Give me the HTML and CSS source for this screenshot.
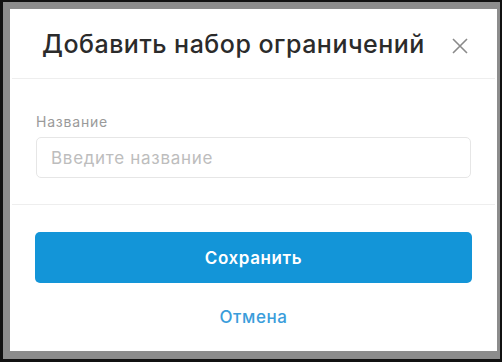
FILE: index.html
```html
<!DOCTYPE html>
<html lang="ru">
<head>
    <meta charset="UTF-8">
    <meta name="viewport" content="width=device-width, initial-scale=1.0">
    <title>Добавить набор ограничений</title>
    <link rel="stylesheet" href="styles.css">
</head>
<body>
    <div class="modal">
        <div class="modal-header">
            <h1 class="modal-title">Добавить набор ограничений</h1>
            <button class="close-button" aria-label="Закрыть">
                <svg width="16" height="16" viewBox="0 0 16 16"><path d="M1 1L15 15M15 1L1 15" stroke="#8a8a8a" stroke-width="1.6" fill="none"/></svg>
            </button>
        </div>
        <div class="modal-body">
            <label class="field-label" for="name">Название</label>
            <input id="name" class="field-input" type="text" placeholder="Введите название">
        </div>
        <div class="modal-footer">
            <button class="save-button">Сохранить</button>
            <a href="#" class="cancel-link">Отмена</a>
        </div>
    </div>
</body>
</html>
```

FILE: styles.css
```css
*{
    margin: 0px;
    box-sizing: border-box;
}
body{
    width: 502px;
    height: 362px;
    background-color: #8c8c8c;
    border-style: solid;
    border-color: #111;
    border-width: 2px 2px 3px 3px;
    padding: 7px 3px 8px 7px;
    font-family: Inter, "Noto Sans", sans-serif;
}
.modal{
    height: 100%;
    background-color: white;
    display: flex;
    flex-direction: column;
}
.modal-header{
    height: 70px;
    display: flex;
    align-items: center;
    justify-content: space-between;
    padding: 0px 27px 0px 30px;
    border-bottom: 1px solid #eeeeee;
    margin: 0px 2px;
}
.modal-title{
    font-size: 25px;
    font-weight: 500;
    letter-spacing: 0.5px;
    color: #2b2b2b;
}
.close-button{
    background: none;
    border: none;
    padding: 0px;
    width: 16px;
    height: 16px;
    margin-top: 4px;
    display: flex;
}
.modal-body{
    padding: 34px 24px 26px 24px;
    border-bottom: 1px solid #eeeeee;
    margin: 0px 2px;
}
.field-label{
    display: block;
    font-size: 14px;
    line-height: 17px;
    letter-spacing: 0.8px;
    color: #9a9a9a;
    margin-bottom: 7px;
}
.field-input{
    width: 100%;
    height: 41px;
    border: 1px solid #e6e6e6;
    border-radius: 5px;
    padding: 0px 14px;
    font-family: inherit;
    font-size: 17px;
    letter-spacing: 0.7px;
    color: #333;
}
.field-input::placeholder{
    color: #bdbdbd;
}
.modal-footer{
    padding: 27px 25px 0px 25px;
    display: flex;
    flex-direction: column;
    align-items: center;
}
.save-button{
    width: 100%;
    height: 51px;
    background-color: #1395d8;
    color: white;
    border: none;
    border-radius: 5px;
    font-family: inherit;
    font-size: 17px;
    letter-spacing: 0.6px;
    font-weight: 600;
}
.cancel-link{
    margin-top: 24px;
    color: #3a9ddb;
    font-size: 17px;
    line-height: 21px;
    letter-spacing: 0.6px;
    font-weight: 500;
    text-decoration: none;
}
```
